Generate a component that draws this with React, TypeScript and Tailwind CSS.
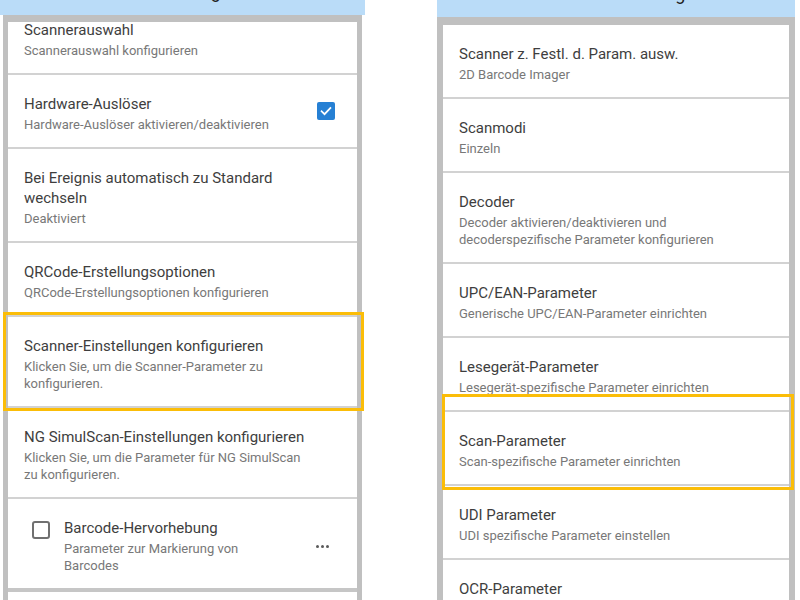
import React from "react";

type Pref = {
  title: string[];
  sub: string[];
  checked?: boolean;
};

const leftItems: Pref[] = [
  { title: ["Scannerauswahl"], sub: ["Scannerauswahl konfigurieren"] },
  {
    title: ["Hardware-Auslöser"],
    sub: ["Hardware-Auslöser aktivieren/deaktivieren"],
    checked: true,
  },
  { title: ["Bei Ereignis automatisch zu Standard", "wechseln"], sub: ["Deaktiviert"] },
  { title: ["QRCode-Erstellungsoptionen"], sub: ["QRCode-Erstellungsoptionen konfigurieren"] },
  {
    title: ["Scanner-Einstellungen konfigurieren"],
    sub: ["Klicken Sie, um die Scanner-Parameter zu", "konfigurieren."],
  },
  {
    title: ["NG SimulScan-Einstellungen konfigurieren"],
    sub: ["Klicken Sie, um die Parameter für NG SimulScan", "zu konfigurieren."],
  },
];

const rightItems: Pref[] = [
  { title: ["Scanner z. Festl. d. Param. ausw."], sub: ["2D Barcode Imager"] },
  { title: ["Scanmodi"], sub: ["Einzeln"] },
  {
    title: ["Decoder"],
    sub: ["Decoder aktivieren/deaktivieren und", "decoderspezifische Parameter konfigurieren"],
  },
  { title: ["UPC/EAN-Parameter"], sub: ["Generische UPC/EAN-Parameter einrichten"] },
  { title: ["Lesegerät-Parameter"], sub: ["Lesegerät-spezifische Parameter einrichten"] },
  { title: ["Scan-Parameter"], sub: ["Scan-spezifische Parameter einrichten"] },
  { title: ["UDI Parameter"], sub: ["UDI spezifische Parameter einstellen"] },
  { title: ["OCR-Parameter"], sub: ["OCR-spezifische Parameter einrichten"] },
];

function Divider({ thick = false }: { thick?: boolean }) {
  return <div className={thick ? "h-[4px] bg-[#c6c6c6]" : "h-[2px] bg-[#d2d2d2]"} />;
}

function Texts({ item }: { item: Pref }) {
  return (
    <div className="flex flex-col">
      {item.title.map((t) => (
        <div key={t} className="text-[15px] leading-[20px] text-[#3e3e3e] whitespace-nowrap">
          {t}
        </div>
      ))}
      <div className="mt-[2px]">
        {item.sub.map((s) => (
          <div key={s} className="text-[13px] leading-[17px] text-[#787878] whitespace-nowrap">
            {s}
          </div>
        ))}
      </div>
    </div>
  );
}

function CheckedBox() {
  return (
    <div className="w-[18px] h-[18px] rounded-[2px] bg-[#2680d4] flex items-center justify-center">
      <svg width="14" height="14" viewBox="0 0 24 24" fill="none">
        <path d="M4.5 12.5l5 5L19.5 7" stroke="white" strokeWidth="3" strokeLinecap="square" />
      </svg>
    </div>
  );
}

function PrefRow({ item }: { item: Pref }) {
  return (
    <div className="flex items-center pl-[16px] pr-[22px] pt-[19px] pb-[14px]">
      <div className="flex-1">
        <Texts item={item} />
      </div>
      {item.checked && (
        <div className="-mt-[6px]">
          <CheckedBox />
        </div>
      )}
    </div>
  );
}

function HighlightRow() {
  return (
    <div className="flex pl-[24px] pt-[19px] pb-[14px]">
      <div className="w-[18px] h-[18px] mt-[3px] rounded-[3px] border-2 border-[#707070]" />
      <div className="w-[226px] ml-[14px] flex flex-col">
        <div className="text-[15px] leading-[20px] text-[#3e3e3e]">Barcode-Hervorhebung</div>
        <div className="mt-[2px] text-[13px] leading-[17px] text-[#787878]">
          <div>Parameter zur Markierung von</div>
          <div>Barcodes</div>
        </div>
      </div>
      <div className="flex-1 flex items-center justify-center gap-[2px] pr-[2px]">
        <span className="w-[3px] h-[3px] rounded-full bg-[#5a5a5a]" />
        <span className="w-[3px] h-[3px] rounded-full bg-[#5a5a5a]" />
        <span className="w-[3px] h-[3px] rounded-full bg-[#5a5a5a]" />
      </div>
    </div>
  );
}

export default function App() {
  return (
    <div className="w-[800px] h-[600px] overflow-hidden bg-white flex font-['Roboto','Noto_Sans',sans-serif]">
      {/* Left screen: data input settings */}
      <div className="relative w-[365px] h-full flex flex-col">
        <div className="h-[15px] bg-[#badcf8] overflow-hidden">
          <div className="-mt-[20px] text-center text-[18px] leading-[24px] text-[#222]">
            Barcode-Eingabe
          </div>
        </div>
        <div className="flex-1 mx-[3px] bg-[#c0c0c0] px-[5px] pt-[7px] flex flex-col min-h-0">
          <div className="flex-1 bg-white overflow-hidden">
            <div className="-mt-[21px]">
              {leftItems.map((item) => (
                <div key={item.title[0]}>
                  <PrefRow item={item} />
                  <Divider />
                </div>
              ))}
              <HighlightRow />
              <Divider thick />
            </div>
          </div>
        </div>
        <div className="absolute left-[3px] top-[312px] w-[361px] h-[99px] border-[3px] border-[#fbbd08]" />
      </div>

      {/* Right screen: scanner settings */}
      <div className="relative w-[358px] ml-[72px] h-full flex flex-col">
        <div className="h-[17px] bg-[#badcf8] overflow-hidden">
          <div className="-mt-[18px] text-center text-[18px] leading-[24px] text-[#222]">
            Scanner-Einstellungen
          </div>
        </div>
        <div className="flex-1 bg-[#c0c0c0] px-[6px] pt-[8px] flex flex-col min-h-0">
          <div className="flex-1 bg-white overflow-hidden">
            {rightItems.map((item) => (
              <div key={item.title[0]}>
                <PrefRow item={item} />
                <Divider />
              </div>
            ))}
          </div>
        </div>
        <div className="absolute left-[5px] top-[394px] w-[352px] h-[96px] border-[3px] border-[#fbbd08]" />
      </div>
    </div>
  );
}
